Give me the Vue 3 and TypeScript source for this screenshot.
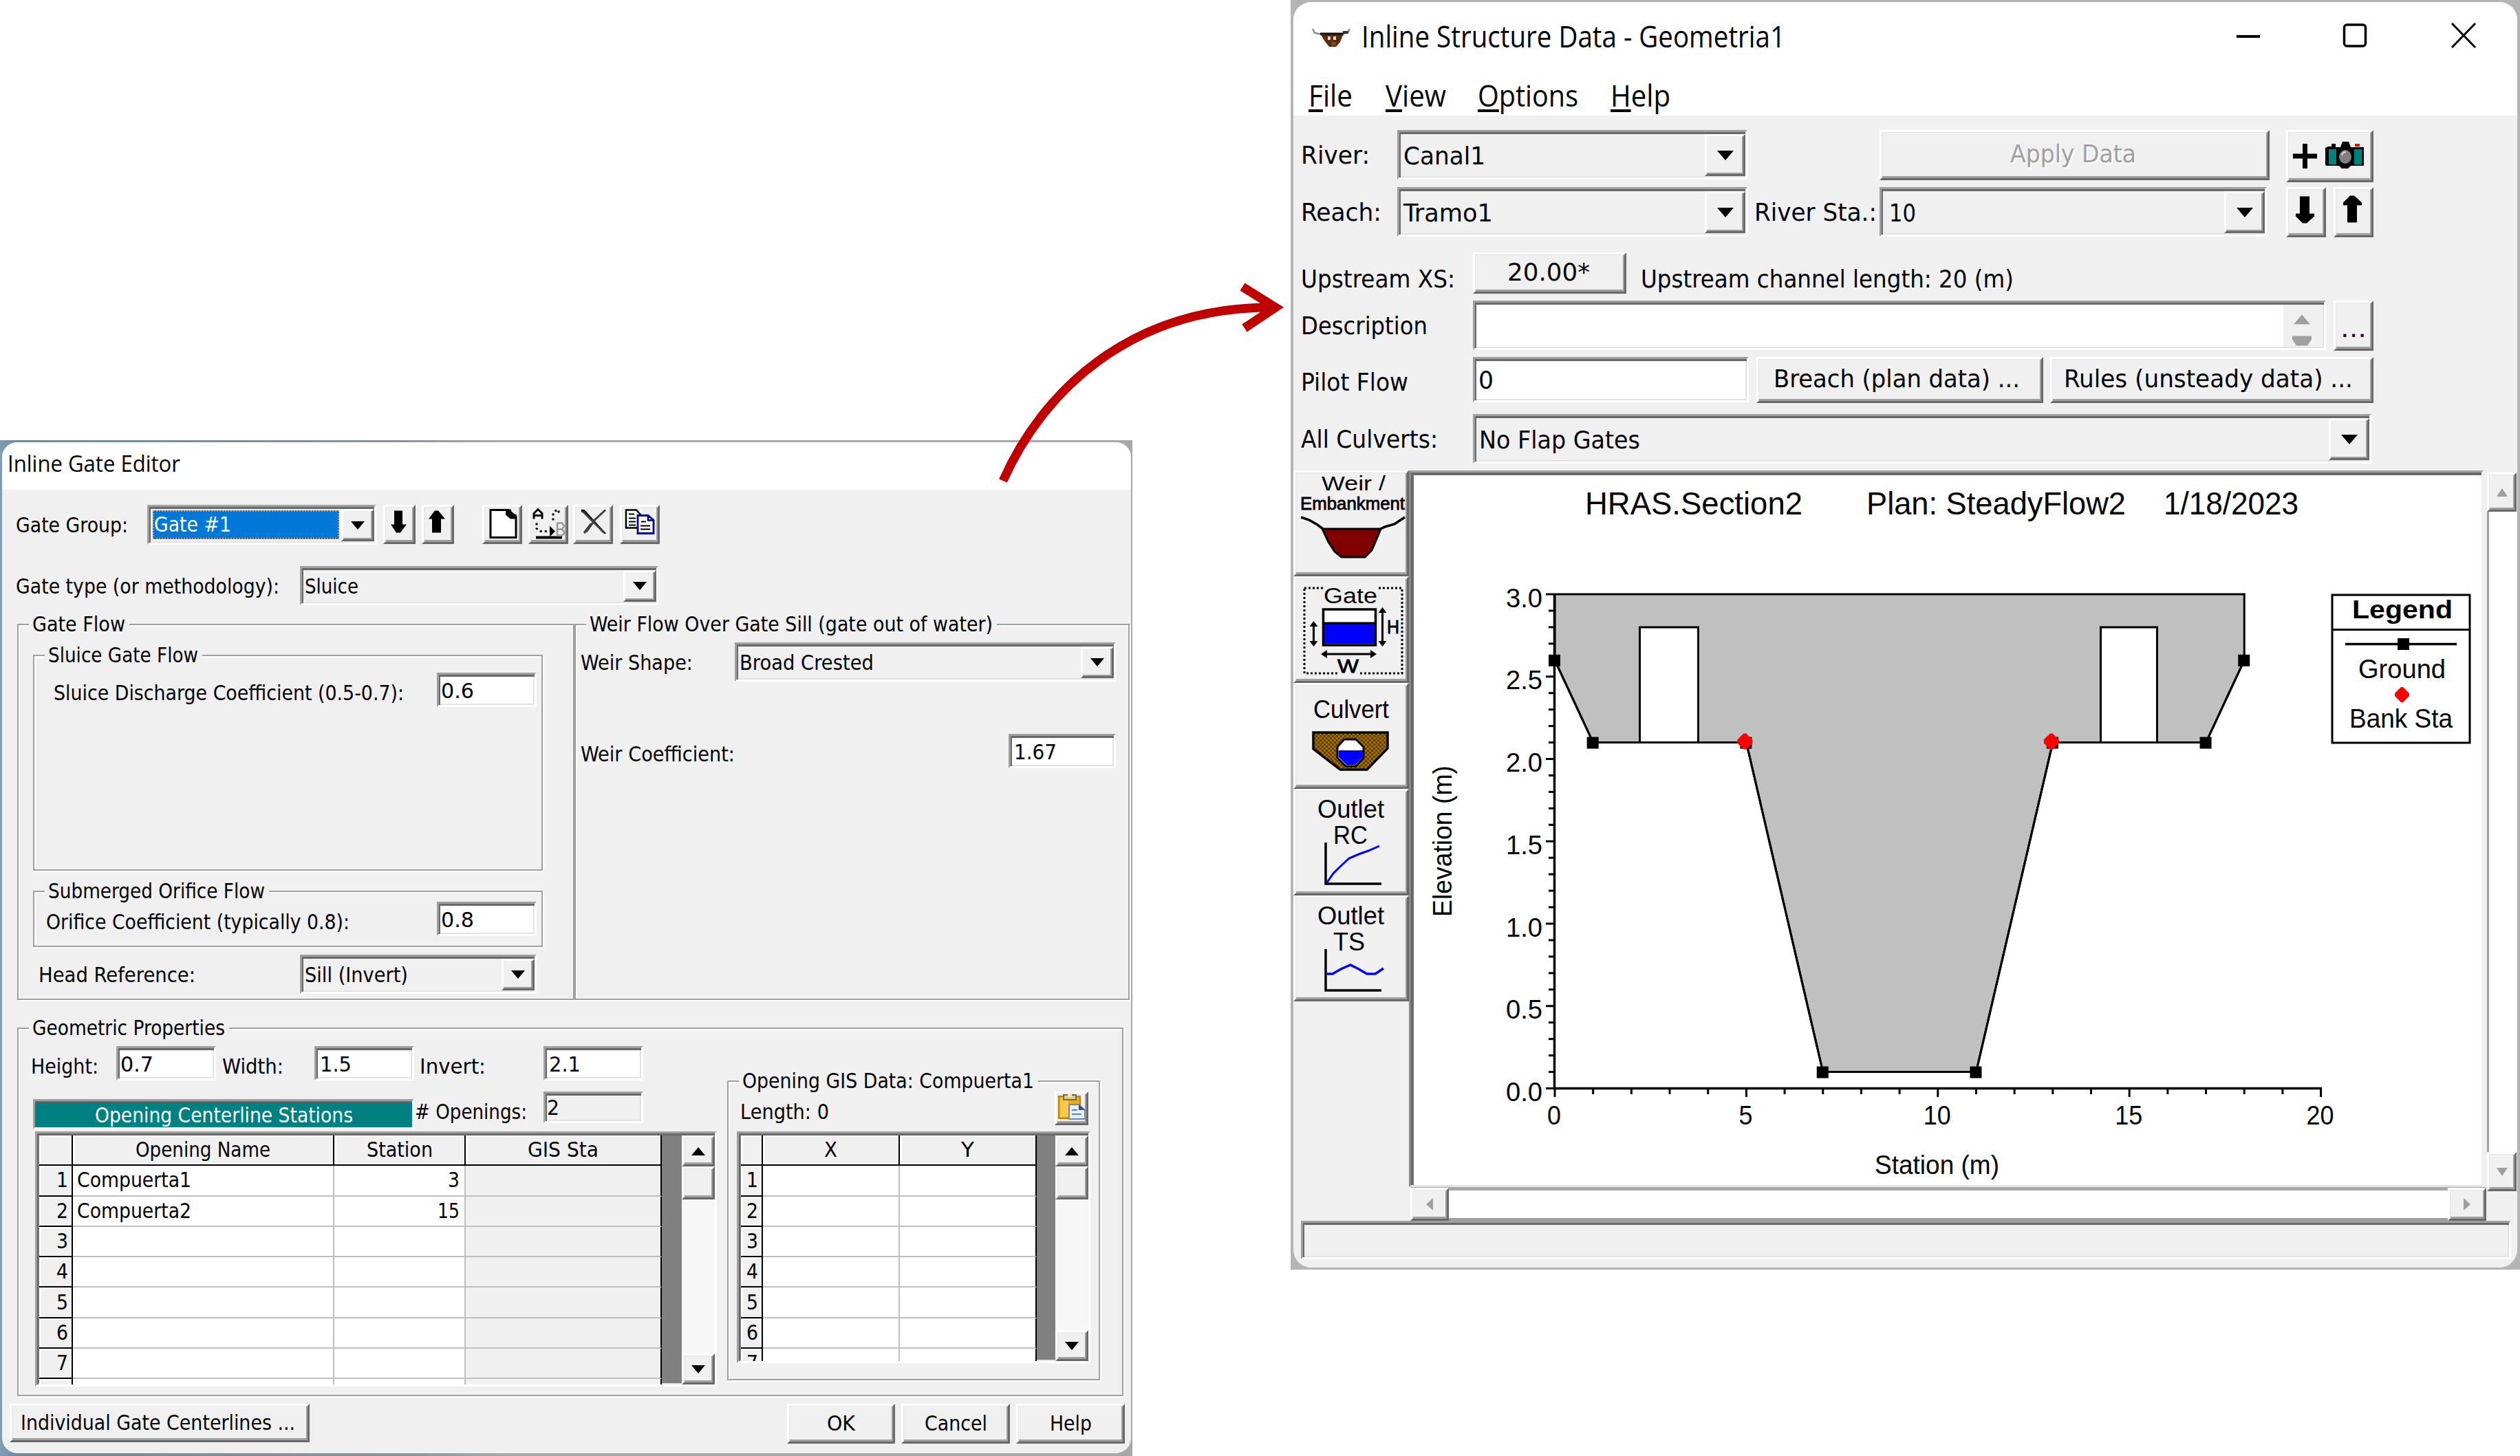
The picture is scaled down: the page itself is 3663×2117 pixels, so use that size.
<script setup lang="ts">
import type { Directive } from 'vue'

// Squeezes or stretches a label to the width it has in the dialog's own font.
const vFit: Directive<HTMLElement, number> = {
  mounted(el, { value }) {
    const natural = el.getBoundingClientRect().width
    const target = value + 3
    el.style.transform = `scaleX(${target / natural})`
    el.style.marginRight = `${target - natural}px`
  },
}

interface OpeningRow { n: number | null; name: string; nameW: number; station: string; stationW: number }
const openings: OpeningRow[] = [
  { n: 1, name: 'Compuerta1', nameW: 163, station: '3', stationW: 14 },
  { n: 2, name: 'Compuerta2', nameW: 163, station: '15', stationW: 29 },
  ...[3, 4, 5, 6, 7, null].map((n) => ({ n, name: '', nameW: 0, station: '', stationW: 0 })),
]
const gisRows = [1, 2, 3, 4, 5, 6, 7]

const menus = [
  { key: 'F', rest: 'ile', w: 61, cls: 'm-file' },
  { key: 'V', rest: 'iew', w: 85, cls: 'm-view' },
  { key: 'O', rest: 'ptions', w: 143, cls: 'm-options' },
  { key: 'H', rest: 'elp', w: 84, cls: 'm-help' },
]

// Cross-section plot scales
const px = (s: number) => 2260 + s * 55.68
const py = (e: number) => 1582.5 - e * 239.5
const ground: [number, number][] = [[0, 2.6], [1, 2.1], [5, 2.1], [7, 0.1], [11, 0.1], [13, 2.1], [17, 2.1], [18, 2.6]]
const groundPts = ground.map(([s, e]) => `${px(s)},${py(e)}`).join(' ')
const fillPts = `${px(0)},${py(3)} ${groundPts} ${px(18)},${py(3)}`
const banks = [5, 13]
const yTicks = Array.from({ length: 31 }, (_, i) => ({ y: py(i / 10), major: i % 5 === 0, label: (i / 10).toFixed(1) }))
const xTicks = Array.from({ length: 21 }, (_, i) => ({ x: px(i), major: i % 5 === 0, label: String(i) }))
</script>

<template>
  <main class="canvas">
    <!-- Inline Gate Editor -->
    <section class="gate-back">
      <div class="gate-win">
        <header class="g-title"><span v-fit="248" class="t">Inline Gate Editor</span></header>

        <div class="row r-group">
          <div class="lab"><span v-fit="160" class="t">Gate Group:</span></div>
          <div class="combo c-group">
            <div class="sel"><span v-fit="109" class="t">Gate #1</span></div>
            <div class="drop"><svg viewBox="0 0 20 12"><path d="M0 0H20L10 12Z" /></svg></div>
          </div>
          <div class="btn arrow"><svg viewBox="557 734 47 56"><path d="M573 742h12v20h6l-9 12h-6l-8-12h5z" /></svg></div>
          <div class="btn arrow"><svg viewBox="613 734 47 56"><path d="M628 774h13v-20h6l-10-12h-5l-9 12h5z" /></svg></div>
          <div class="btn tool">
            <svg viewBox="701 734 58 56">
              <path d="M713 741h26l11 10v30h-37z" fill="#fff" stroke="#000" stroke-width="3" />
              <path d="M735 740h8v5l8 3v6h-9l-7-6z" />
            </svg>
          </div>
          <div class="btn tool">
            <svg viewBox="768 734 58 56">
              <path d="M776 754v-8l6-6l6 6v8M776 749h12" fill="none" stroke="#000" stroke-width="3" />
              <path d="M780 760v8l6 4h11M804 756v-10l6-6l3 5" fill="none" stroke="#000" stroke-width="3" stroke-dasharray="3 4" />
              <path d="M799 764v16l8-8z" />
              <path d="M779 781h38" stroke="#000" stroke-width="4" />
              <path d="M810 760v18h7l4-4-4-5 3-5-3-4zM810 769h7" fill="none" stroke="#999" stroke-width="2.5" />
            </svg>
          </div>
          <div class="btn tool">
            <svg viewBox="833 734 58 56">
              <path d="M845 740l5 1 31 34-2 1-29-30-5-2z" />
              <path d="M847 743l31 31M880 741l-15 14-13 18" fill="none" stroke="#404040" stroke-width="3" />
              <path d="M848 773l10-13 3 2-8 10-3 4z" fill="#404040" />
            </svg>
          </div>
          <div class="btn tool">
            <svg viewBox="901 734 58 56">
              <path d="M910 741h15l6 7v19h-21z" fill="#fff" stroke="#000" stroke-width="2.5" />
              <path d="M914 747h8M914 753h10M914 758h10M914 763h10" stroke="#000" stroke-width="2" />
              <path d="M927 749h15l8 7v19h-23z" fill="#fff" stroke="#00008b" stroke-width="2.8" />
              <path d="M942 749v7h8" fill="none" stroke="#00008b" stroke-width="2.5" />
              <path d="M932 758h7M931 764h14M931 769h14" stroke="#000" stroke-width="2" />
            </svg>
          </div>
        </div>

        <div class="row r-type">
          <div class="lab"><span v-fit="380" class="t">Gate type (or methodology):</span></div>
          <div class="combo c-type">
            <span v-fit="75" class="t ctext">Sluice</span>
            <div class="drop"><svg viewBox="0 0 20 12"><path d="M0 0H20L10 12Z" /></svg></div>
          </div>
        </div>

        <div class="flows">
          <div class="group g-flow">
            <div class="legend"><span v-fit="132" class="t">Gate Flow</span></div>
            <div class="group g-sluice">
              <div class="legend"><span v-fit="215" class="t">Sluice Gate Flow</span></div>
              <div class="row r-sluice">
                <div class="lab"><span v-fit="506" class="t">Sluice Discharge Coefficient (0.5-0.7):</span></div>
                <div class="input"><span v-fit="45" class="t">0.6</span></div>
              </div>
            </div>
            <div class="group g-sub">
              <div class="legend"><span v-fit="312" class="t">Submerged Orifice Flow</span></div>
              <div class="row r-sub">
                <div class="lab"><span v-fit="438" class="t">Orifice Coefficient (typically 0.8):</span></div>
                <div class="input"><span v-fit="45" class="t">0.8</span></div>
              </div>
            </div>
            <div class="row r-head">
              <div class="lab"><span v-fit="225" class="t">Head Reference:</span></div>
              <div class="combo c-head">
                <span v-fit="147" class="t ctext">Sill (Invert)</span>
                <div class="drop"><svg viewBox="0 0 20 12"><path d="M0 0H20L10 12Z" /></svg></div>
              </div>
            </div>
          </div>
          <div class="group g-weir">
            <div class="legend"><span v-fit="583" class="t">Weir Flow Over Gate Sill (gate out of water)</span></div>
            <div class="row r-shape">
              <div class="lab"><span v-fit="160" class="t">Weir Shape:</span></div>
              <div class="combo c-shape">
                <span v-fit="192" class="t ctext">Broad Crested</span>
                <div class="drop"><svg viewBox="0 0 20 12"><path d="M0 0H20L10 12Z" /></svg></div>
              </div>
            </div>
            <div class="row r-coef">
              <div class="lab"><span v-fit="221" class="t">Weir Coefficient:</span></div>
              <div class="input i-coef"><span v-fit="59" class="t">1.67</span></div>
            </div>
          </div>
        </div>

        <div class="group g-geom">
          <div class="legend"><span v-fit="277" class="t">Geometric Properties</span></div>
          <div class="geom-left">
            <div class="row r-dims">
              <div class="lab"><span v-fit="95" class="t">Height:</span></div>
              <div class="input"><span v-fit="45" class="t">0.7</span></div>
              <div class="lab"><span v-fit="86" class="t">Width:</span></div>
              <div class="input"><span v-fit="43" class="t">1.5</span></div>
              <div class="lab"><span v-fit="93" class="t">Invert:</span></div>
              <div class="input"><span v-fit="43" class="t">2.1</span></div>
            </div>
            <div class="row r-open">
              <div class="teal"><span v-fit="372" class="t">Opening Centerline Stations</span></div>
              <div class="lab"><span v-fit="160" class="t"># Openings:</span></div>
              <div class="input i-num"><span v-fit="15" class="t">2</span></div>
            </div>
            <div class="table t-open">
              <div class="cells">
                <div class="tr">
                  <div class="th c-n"></div>
                  <div class="th"><span v-fit="193" class="t">Opening Name</span></div>
                  <div class="th"><span v-fit="93" class="t">Station</span></div>
                  <div class="th last"><span v-fit="100" class="t">GIS Sta</span></div>
                </div>
                <div v-for="(r, i) in openings" :key="i" class="tr">
                  <div class="rn"><span v-if="r.n" v-fit="14" class="t">{{ r.n }}</span></div>
                  <div class="td"><span v-if="r.name" v-fit="r.nameW" class="t">{{ r.name }}</span></div>
                  <div class="td right"><span v-if="r.station" v-fit="r.stationW" class="t">{{ r.station }}</span></div>
                  <div class="td off last"></div>
                </div>
              </div>
              <div class="vbar">
                <div class="btn"><svg viewBox="0 0 20 12"><path d="M0 12H20L10 0Z" /></svg></div>
                <div class="btn thumb"></div>
                <div class="btn end"><svg viewBox="0 0 20 12"><path d="M0 0H20L10 12Z" /></svg></div>
              </div>
            </div>
          </div>
          <div class="group g-gis">
            <div class="legend"><span v-fit="421" class="t">Opening GIS Data: Compuerta1</span></div>
            <div class="row r-len">
              <div class="lab"><span v-fit="126" class="t">Length: 0</span></div>
              <div class="btn paste">
                <svg viewBox="1533 1588 49 49">
                  <path d="M1539 1595h31v32h-31z" fill="#e9a820" stroke="#b98018" stroke-width="2" />
                  <path d="M1541 1597h12v28h-12z" fill="#f8c94c" />
                  <path d="M1546 1593h18v7h-18z" fill="#d8cfa0" stroke="#7d6a30" stroke-width="2" />
                  <path d="M1552 1591h6v5h-6z" fill="#f4e7a8" />
                  <path d="M1554 1607h14l9 8v13h-23z" fill="#e6f0fa" stroke="#6a87ad" stroke-width="2" />
                  <path d="M1568 1607v8h9z" fill="#37507a" />
                  <path d="M1558 1615h8M1558 1621h14" stroke="#5e86bd" stroke-width="2" />
                </svg>
              </div>
            </div>
            <div class="table t-gis">
              <div class="cells">
                <div class="tr">
                  <div class="th c-n"></div>
                  <div class="th"><span v-fit="16" class="t">X</span></div>
                  <div class="th last"><span v-fit="16" class="t">Y</span></div>
                </div>
                <div v-for="n in gisRows" :key="n" class="tr">
                  <div class="rn"><span v-fit="14" class="t">{{ n }}</span></div>
                  <div class="td"></div>
                  <div class="td last"></div>
                </div>
              </div>
              <div class="vbar">
                <div class="btn"><svg viewBox="0 0 20 12"><path d="M0 12H20L10 0Z" /></svg></div>
                <div class="btn thumb"></div>
                <div class="btn end"><svg viewBox="0 0 20 12"><path d="M0 0H20L10 12Z" /></svg></div>
              </div>
            </div>
          </div>
        </div>

        <footer class="g-foot">
          <div class="btn b-ind"><span v-fit="396" class="t">Individual Gate Centerlines ...</span></div>
          <div class="btn b-act"><span v-fit="38" class="t">OK</span></div>
          <div class="btn b-act"><span v-fit="88" class="t">Cancel</span></div>
          <div class="btn b-act"><span v-fit="58" class="t">Help</span></div>
        </footer>
      </div>
    </section>

    <!-- Inline Structure Data -->
    <section class="str-back">
      <div class="str-win">
        <header class="s-title">
          <svg class="appicon" viewBox="1906 38 58 36">
            <path d="M1908 42l3 6 10 2M1962 42l-3 5-8 3" fill="none" stroke="#8a8a8a" stroke-width="2.5" />
            <path d="M1919 49h34l-5 12-6 7h-10l-7-9z" fill="#5a2c08" />
            <path d="M1919 49h34" stroke="#111" stroke-width="3" />
            <path d="M1930 53h4v5h-4zM1938 53h4v5h-4z" fill="#ddd" />
            <path d="M1935 61h7v5h-7z" fill="#8a4510" />
            <path d="M1952 45h8v4h-8z" fill="#333" />
          </svg>
          <span v-fit="613" class="t">Inline Structure Data - Geometria1</span>
          <svg class="wbtns" viewBox="3240 28 370 48">
            <path d="M3251 53h34" stroke="#000" stroke-width="4" />
            <rect x="3407.500" y="36" width="31" height="31" rx="4" fill="none" stroke="#000" stroke-width="3.500" />
            <path d="M3564 34l34 35M3598 34l-34 35" stroke="#000" stroke-width="3" />
          </svg>
        </header>
        <nav class="menu">
          <span v-for="m in menus" :key="m.key" v-fit="m.w" class="t" :class="m.cls"><u>{{ m.key }}</u>{{ m.rest }}</span>
        </nav>

        <div class="row r-river">
          <div class="lab"><span v-fit="97" class="t">River:</span></div>
          <div class="combo c-river"><span v-fit="116" class="t ctext">Canal1</span><div class="drop"><svg viewBox="0 0 24 14"><path d="M0 0H24L12 14Z" /></svg></div></div>
          <div class="btn b-apply"><span v-fit="180" class="t">Apply Data</span></div>
          <div class="btn b-cam">
            <svg viewBox="3323 189 127 76">
              <path d="M3333 227h35M3350.500 209v36" stroke="#000" stroke-width="7" />
              <path d="M3389 209h6v5h7l3-8h9l3 8h19v27h-19l-4 4h-9l-4-4h-19l-1-2v-24l4-2h5z" />
              <path d="M3385 217h11v22h-11zM3422 217h11v22h-11z" fill="#008080" />
              <ellipse cx="3409" cy="228" rx="9" ry="10" fill="#808080" />
              <path d="M3404 226q1-5 6-5" stroke="#ddd" stroke-width="2" fill="none" />
              <path d="M3423 209h7v4h-7z" fill="#f00" />
            </svg>
          </div>
        </div>
        <div class="row r-reach">
          <div class="lab"><span v-fit="114" class="t">Reach:</span></div>
          <div class="combo c-river"><span v-fit="127" class="t ctext">Tramo1</span><div class="drop"><svg viewBox="0 0 24 14"><path d="M0 0H24L12 14Z" /></svg></div></div>
          <div class="lab"><span v-fit="175" class="t">River Sta.:</span></div>
          <div class="combo c-sta"><span v-fit="36" class="t ctext">10</span><div class="drop"><svg viewBox="0 0 24 14"><path d="M0 0H24L12 14Z" /></svg></div></div>
          <div class="btn b-arr"><svg viewBox="3323 272 58 72"><path d="M3343 285h14v25h7v4l-11 10h-6l-10-10v-4h6z" /></svg></div>
          <div class="btn b-arr"><svg viewBox="3392 272 58 72"><path d="M3412 323h14v-25h7v-4l-11-10h-6l-10 10v4h6z" /></svg></div>
        </div>
        <div class="row r-up">
          <div class="lab"><span v-fit="221" class="t">Upstream XS:</span></div>
          <div class="btn b-xs"><span v-fit="117" class="t">20.00*</span></div>
          <div class="lab"><span v-fit="539" class="t">Upstream channel length: 20 (m)</span></div>
        </div>
        <div class="row r-desc">
          <div class="lab"><span v-fit="181" class="t">Description</span></div>
          <div class="input i-desc">
            <svg viewBox="3320 443 57 60"><path d="M3347 457l12 14h-24zM3333 488h28v5l-6 9h-16l-6-9z" fill="#a0a0a0" /></svg>
          </div>
          <div class="btn b-dots"><span v-fit="35" class="t">...</span></div>
        </div>
        <div class="row r-pilot">
          <div class="lab"><span v-fit="153" class="t">Pilot Flow</span></div>
          <div class="input i-pilot"><span v-fit="19" class="t">0</span></div>
          <div class="btn b-breach"><span v-fit="355" class="t">Breach (plan data) ...</span></div>
          <div class="btn b-rules"><span v-fit="417" class="t">Rules (unsteady data) ...</span></div>
        </div>
        <div class="row r-culv">
          <div class="lab"><span v-fit="196" class="t">All Culverts:</span></div>
          <div class="combo c-culv"><span v-fit="231" class="t ctext">No Flap Gates</span><div class="drop"><svg viewBox="0 0 24 14"><path d="M0 0H24L12 14Z" /></svg></div></div>
        </div>

        <div class="main">
          <div class="tools">
            <div class="btn big">
              <svg viewBox="1879 684 169 154">
                <text x="1920" y="713" font-size="29" textLength="93" lengthAdjust="spacingAndGlyphs">Weir /</text>
                <text x="1889" y="741" font-size="26" textLength="152" lengthAdjust="spacingAndGlyphs" class="heavy">Embankment</text>
                <path d="M1921 769h85l-7 17-6 14-10 10h-34l-10-8-9-14z" fill="#800000" stroke="#000" stroke-width="3" />
                <path d="M1890 752l12 4 12 7 8 6M2004 770l8-4 14-4 15-10" fill="none" stroke="#000" stroke-width="3.500" />
              </svg>
            </div>
            <div class="btn big">
              <svg viewBox="1879 838 169 154">
                <rect x="1895" y="854" width="142" height="124" fill="none" stroke="#000" stroke-width="3" stroke-dasharray="3 3" />
                <path d="M1922 846h80v16h-80zM1944 960h30v22h-30z" fill="#f0f0f0" />
                <text x="1923" y="876" font-size="31" textLength="78" lengthAdjust="spacingAndGlyphs">Gate</text>
                <rect x="1922.500" y="885" width="76" height="52" fill="#fff" stroke="#000" stroke-width="3.500" />
                <path d="M1924 906h73v29h-73z" fill="#00f" />
                <path d="M1922 905h77M1908.500 908v26M2008.500 888v46M1925 950h70" stroke="#000" stroke-width="3" />
                <path d="M1908.500 902l6 8h-12zM1908.500 939l6-8h-12zM2008.500 882l6 8h-12zM2008.500 939l6-8h-12zM1919 950l9-6v12zM2000 950l-9-6v12z" />
                <text x="2015" y="920" font-size="28" textLength="18" lengthAdjust="spacingAndGlyphs" class="heavy">H</text>
                <text x="1943" y="977" font-size="27" textLength="31" lengthAdjust="spacingAndGlyphs" class="heavy">W</text>
              </svg>
            </div>
            <div class="btn big">
              <svg viewBox="1879 992 169 154">
                <defs>
                  <pattern id="earth" width="6" height="6" patternUnits="userSpaceOnUse">
                    <rect width="6" height="6" fill="#8a2a00" /><rect width="3" height="3" fill="#808000" /><rect x="3" y="3" width="3" height="3" fill="#808000" />
                  </pattern>
                </defs>
                <text x="1908" y="1043" font-size="36" textLength="110" lengthAdjust="spacingAndGlyphs">Culvert</text>
                <path d="M1908 1064h108v23l-30 31h-39l-39-30z" fill="url(#earth)" stroke="#000" stroke-width="3.500" />
                <path d="M1953 1074h17l11 11v16l-11 12h-15l-12-12v-16z" fill="#fff" stroke="#000" stroke-width="3" />
                <path d="M1945 1090h35v10l-11 11h-13l-11-11z" fill="#00f" />
              </svg>
            </div>
            <div class="btn big">
              <svg viewBox="1879 1146 169 154">
                <text x="1914" y="1188" font-size="37" textLength="97" lengthAdjust="spacingAndGlyphs">Outlet</text>
                <text x="1937" y="1226" font-size="37" textLength="50" lengthAdjust="spacingAndGlyphs">RC</text>
                <path d="M1926 1224v60h81" fill="none" stroke="#000" stroke-width="3.500" />
                <path d="M1928 1282l9-13 9-9 14-13 14-6 14-5 16-7" fill="none" stroke="#00f" stroke-width="3" />
              </svg>
            </div>
            <div class="btn big">
              <svg viewBox="1879 1301 169 154">
                <text x="1914" y="1343" font-size="37" textLength="97" lengthAdjust="spacingAndGlyphs">Outlet</text>
                <text x="1937" y="1381" font-size="37" textLength="46" lengthAdjust="spacingAndGlyphs">TS</text>
                <path d="M1926 1379v60h81" fill="none" stroke="#000" stroke-width="3.500" />
                <path d="M1928 1415h8l12-7 14-6 12 6 12 7h12l12-8" fill="none" stroke="#00f" stroke-width="3.500" />
              </svg>
            </div>
          </div>
          <div class="plot">
            <svg viewBox="2055 690 1553 1034">
              <text x="2304" y="748" font-size="47" textLength="316" lengthAdjust="spacingAndGlyphs">HRAS.Section2</text>
              <text x="2713" y="748" font-size="47" textLength="377" lengthAdjust="spacingAndGlyphs">Plan: SteadyFlow2</text>
              <text x="3145" y="748" font-size="47" textLength="196" lengthAdjust="spacingAndGlyphs">1/18/2023</text>

              <polygon :points="fillPts" fill="#c0c0c0" stroke="#000" stroke-width="3" />
              <path d="M2383.500 1080V912h85v168M3053.500 1080V912h82v168" fill="#fff" stroke="#000" stroke-width="3" />
              <polyline :points="groundPts" fill="none" stroke="#000" stroke-width="3" />
              <rect v-for="(g, i) in ground" :key="i" :x="px(g[0]) - 9" :y="py(g[1]) - 8" width="17" height="17" />
              <path v-for="b in banks" :key="b" :d="`M${px(b) - 4} ${py(2.1) - 13}h4l9 9v5l-9 9h-4l-9-9v-5z`" fill="#f00" />

              <path d="M2259.500 863V1582.500H3375" fill="none" stroke="#000" stroke-width="3.500" />
              <g v-for="t in yTicks" :key="t.label">
                <path :d="`M${t.major ? 2247 : 2251} ${t.y}H2259`" stroke="#000" stroke-width="3" />
                <text v-if="t.major" x="2189" :y="t.y + 18.500" font-size="38" textLength="53" lengthAdjust="spacingAndGlyphs">{{ t.label }}</text>
              </g>
              <g v-for="t in xTicks" :key="t.label">
                <path :d="`M${t.x} 1583v${t.major ? 12 : 8}`" stroke="#000" stroke-width="3" />
                <text v-if="t.major" :x="t.x - 1" y="1635" font-size="38" text-anchor="middle" :textLength="t.label.length * 20" lengthAdjust="spacingAndGlyphs">{{ t.label }}</text>
              </g>
              <text x="2725" y="1707" font-size="38" textLength="181" lengthAdjust="spacingAndGlyphs">Station (m)</text>
              <text transform="translate(2110 1333) rotate(-90)" font-size="38" textLength="220" lengthAdjust="spacingAndGlyphs">Elevation (m)</text>

              <path d="M3390 865h200v215h-200zM3390 915.500h200" fill="#fff" stroke="#000" stroke-width="3" />
              <text x="3419" y="899" font-size="37" font-weight="bold" textLength="146" lengthAdjust="spacingAndGlyphs">Legend</text>
              <path d="M3409 936.500h162" stroke="#000" stroke-width="3.500" />
              <rect x="3485" y="928" width="17" height="17" />
              <text x="3428" y="986" font-size="38" textLength="127" lengthAdjust="spacingAndGlyphs">Ground</text>
              <path d="M3490 999h3l9 9v4l-9 9h-3l-9-9v-4z" fill="#f00" />
              <text x="3415" y="1058" font-size="38" textLength="150" lengthAdjust="spacingAndGlyphs">Bank Sta</text>
            </svg>
          </div>
          <div class="pvbar">
            <div class="btn"><svg viewBox="0 0 16 12"><path d="M0 12H16L8 0Z" fill="#a0a0a0" /></svg></div>
            <div class="btn"><svg viewBox="0 0 16 12"><path d="M0 0H16L8 12Z" fill="#a0a0a0" /></svg></div>
          </div>
        </div>
        <div class="phbar">
          <div class="btn"><svg viewBox="0 0 10 18"><path d="M10 0V18L0 9Z" fill="#a0a0a0" /></svg></div>
          <div class="btn"><svg viewBox="0 0 10 18"><path d="M0 0V18L10 9Z" fill="#a0a0a0" /></svg></div>
        </div>
        <div class="status"></div>
      </div>
    </section>

    <svg class="link" viewBox="1440 400 440 310">
      <path d="M1458 699C1514 572 1640 446 1850 447" fill="none" stroke="#c00000" stroke-width="13" />
      <path d="M1806 417L1854 447L1809 477" fill="none" stroke="#c00000" stroke-width="13" />
    </svg>
  </main>
</template>

<style>
body { margin: 0; background: #fff; }
</style>

<style scoped>
.canvas { position: relative; width: 3663px; height: 2117px; overflow: hidden; background: #fff; color: #000; }
.canvas * { box-sizing: border-box; }
svg { display: block; }
.t { display: inline-block; flex: none; white-space: pre; transform-origin: 0 50%; }

.gate-back {
  position: absolute; left: 0; top: 640px; width: 1646px; height: 1477px; padding: 3px 3px 4px;
  background: linear-gradient(90deg, #7f9db5 0, #71889c 1.5%, #8a9298 35%, #a8a8a8 45%, #a8a8a8 100%);
  font: 30px/36px "DejaVu Sans Condensed", "DejaVu Sans", sans-serif; font-stretch: condensed;
}
.gate-win { width: 1641px; height: 1470px; border-radius: 22px; background: #f0f0f0; overflow: hidden; }
.g-title { height: 69px; background: #fff; padding: 8px 0 0 8px; font: 33px/45px "Open Sans", "Noto Sans", sans-serif; }

.row { display: grid; align-items: start; justify-items: start; }
.lab { display: flex; padding-top: 12px; margin-left: -1px; }
.str-win .lab { padding-top: 15px; }

.btn {
  display: flex; align-items: center; justify-content: center; background: #f0f0f0;
  border: 3px solid; border-color: #fff #696969 #696969 #fff;
  box-shadow: inset 1px 1px #e3e3e3, inset -2px -3px #a0a0a0;
}
.combo, .input, .table, .teal, .status {
  background: #f0f0f0; border: 3px solid; border-color: #a0a0a0 #fff #fff #a0a0a0;
  box-shadow: inset 2px 3px #696969, inset -2px -2px #e3e3e3;
}
.combo { display: flex; justify-content: space-between; padding: 3px 0 2px 2px; height: 57px; }
.ctext { padding-top: 5.5px; margin-left: 2px; }
.drop {
  display: flex; align-items: center; justify-content: center; flex: none; width: 48px; background: #f0f0f0;
  border: 3px solid; border-color: #fff #696969 #696969 #fff; box-shadow: inset -2px -2px #a0a0a0;
}
.drop svg { width: 20px; height: 12px; }
.input { display: flex; background: #fff; width: 145px; height: 50px; padding: 5.5px 0 0 3px; }
.str-win .combo { height: 72px; }
.str-win .ctext { padding-top: 9.5px; margin-left: 4px; }
.str-win .drop { width: 59px; }
.str-win .drop svg { width: 24px; height: 14px; }

.r-group { margin-top: 22px; padding-left: 21px; height: 58px; grid-template-columns: 190px 343px 56px 88px 67px 65px 68px 58px; }
.c-group { width: 333px; height: 58px; }
.sel { width: 271px; height: 42px; margin: 2px 0 0 3px; padding-top: 3px; background: #0078d7; color: #fff; outline: 2px dotted #ff8c1a; outline-offset: -2px; }
.sel .t { margin-left: 2px; }
.btn.arrow { width: 47px; height: 57px; }
.btn.tool { width: 58px; height: 57px; }
.arrow svg, .tool svg, .paste svg, .b-cam svg, .b-arr svg { flex: none; width: calc(100% + 6px); height: calc(100% + 6px); margin: -3px; overflow: visible; }
.r-type { margin-top: 31px; padding-left: 21px; height: 57px; grid-template-columns: 412px 521px; }
.c-type { width: 521px; }

.group { position: relative; border: 2px solid #a0a0a0; box-shadow: inset 2px 2px #fff, 2px 2px #fff; }
.legend { position: absolute; left: 15px; top: -19px; height: 36px; padding: 0 6px 0 5px; background: #f0f0f0; display: flex; }
.flows { display: flex; margin: 27px 0 0 22px; }
.g-flow { width: 810px; height: 547px; }
.g-weir { width: 807px; height: 547px; }
.g-sluice { margin: 43px 0 0 21px; width: 741px; height: 314px; }
.r-sluice { margin-top: 24px; padding-left: 29px; grid-template-columns: 556px 145px; }
.g-sub { margin: 29px 0 0 21px; width: 741px; height: 82px; }
.r-sub { margin-top: 14px; padding-left: 18px; grid-template-columns: 567px 145px; }
.r-head { margin-top: 11px; padding-left: 30px; grid-template-columns: 379px 344px; }
.c-head { width: 344px; }
.r-shape { margin-top: 25px; padding-left: 8px; height: 57px; grid-template-columns: 223px 554px; }
.c-shape { width: 554px; }
.r-coef { margin-top: 76px; padding-left: 8px; grid-template-columns: 621px 156px; }
.i-coef { width: 156px; padding-left: 5px; }

.g-geom { display: flex; align-items: flex-start; margin: 40px 0 0 22px; width: 1608px; height: 536px; }
.geom-left { width: 1030px; }
.r-dims { margin-top: 25px; padding-left: 19px; height: 50px; grid-template-columns: 123px 155px 133px 154px 179px 145px; }
.r-dims .input:nth-child(n + 3) { padding-left: 5px; }
.r-open { margin-top: 16px; padding-left: 21px; height: 58px; grid-template-columns: 556px 186px 145px; }
.teal { width: 554px; height: 44px; margin-top: 11px; background: #008080; color: #fff; display: flex; justify-content: center; padding-top: 3px; box-shadow: inset 0 2px #696969; }
.i-num { background: #f0f0f0; height: 46px; padding-top: 3px; padding-left: 2px; }

.table { display: flex; justify-content: space-between; overflow: hidden; padding: 3px 0 0 3px; background: #808080; }
.t-open { margin-left: 24px; width: 991px; height: 371px; }
.t-gis { margin: 9px 0 0 12px; width: 514px; height: 337px; }
.tr { display: grid; height: 44.3px; }
.t-open .tr { grid-template-columns: 49px 380px 191px 285px; }
.t-gis .tr { grid-template-columns: 32px 199px 199px; }
.th, .rn, .td { display: flex; align-items: center; overflow: hidden; border-right: 2.5px solid #c0c0c0; border-bottom: 2.5px solid #c0c0c0; background: #fff; }
.th { justify-content: center; background: #f0f0f0; border-color: #000; box-shadow: inset 3px 2px #fff; }
.rn { justify-content: flex-end; padding-right: 5px; background: #f0f0f0; border-color: #000; box-shadow: inset 3px 2px #fff; }
.td { padding-left: 6px; }
.td.right { justify-content: flex-end; padding-right: 7px; }
.td.off { background: #f0f0f0; }
.last { border-right-color: #000; }
.vbar { display: flex; flex-direction: column; width: 48px; flex: none; background: #f7f7f7; }
.vbar .btn { height: 45px; flex: none; }
.vbar .thumb { height: 48px; }
.vbar .end { margin-top: auto; }
.vbar svg { width: 20px; height: 12px; }
.g-gis { margin-top: 75px; width: 542px; height: 436px; }
.r-len { margin-top: 14px; padding-left: 18px; height: 49px; grid-template-columns: 456px 49px; }
.paste { width: 49px; height: 49px; }
.g-foot { display: flex; margin: 11px 0 0 11px; }
.b-ind { width: 436px; height: 56px; margin-right: 694px; padding-right: 5px; padding-bottom: 1px; }
.b-act { width: 158px; height: 58px; margin-right: 9px; padding-bottom: 1px; }

.str-back {
  position: absolute; left: 1876px; top: 0; width: 1787px; height: 1846px; padding: 3px 4px; background: #b4b4b4;
  font: 36px/44px "DejaVu Sans Condensed", "DejaVu Sans", sans-serif; font-stretch: condensed;
}
.str-win { width: 1779px; height: 1840px; border-radius: 26px; background: #f0f0f0; overflow: hidden; }
.s-title, .menu { display: flex; background: #fff; font: 43px/60px "Open Sans", "Noto Sans", sans-serif; }
.s-title { height: 105px; padding: 20px 0 0 26px; }
.appicon { width: 58px; height: 36px; margin: 15px 15px 0 0; }
.wbtns { width: 370px; height: 48px; margin: 5px 0 0 auto; position: relative; right: 49px; }
.menu { display: grid; grid-template-columns: 133px 135px 193px 100px; height: 60px; padding-top: 1px; align-items: start; justify-items: start; }
.menu u { text-decoration-thickness: 4px; text-underline-offset: 4px; }
.m-file, .m-view, .m-options, .m-help { margin-left: 22px; }
.m-view { margin-left: 1px; }
.m-options, .m-help { margin-left: 0; }

.r-river { margin-top: 21px; padding-left: 12px; height: 76px; grid-template-columns: 139px 701px 591px 127px; }
.c-river { width: 509px; }
.b-apply { width: 567px; height: 73px; padding: 0 4px 3px 0; color: #a0a0a0; text-shadow: 2px 2px #fff; }
.b-cam { width: 127px; height: 76px; }
.r-reach { margin-top: 7px; padding-left: 12px; height: 73px; grid-template-columns: 139px 520px 181px 591px 69px 58px; }
.c-sta { width: 563px; }
.str-win .c-sta .ctext { margin-left: 9px; }
.b-arr { width: 58px; height: 73px; }
.r-up { margin-top: 22px; padding-left: 12px; height: 59px; grid-template-columns: 249px 245px 545px; }
.str-win .r-up .lab { padding-top: 17px; }
.b-xs { width: 223px; height: 60px; padding: 0 4px 2px 0; }
.r-desc { margin-top: 11px; padding-left: 12px; height: 72px; grid-template-columns: 249px 1251px 58px; }
.i-desc { width: 1240px; height: 72px; justify-content: flex-end; padding: 3px 2px 2px 0; }
.i-desc svg { width: 57px; height: 61px; background: #f0f0f0; }
.b-dots { width: 58px; height: 73px; padding-top: 9px; color: #30003c; }
.r-pilot { margin-top: 10px; padding-left: 12px; height: 66px; grid-template-columns: 249px 412px 427px 470px; }
.i-pilot { width: 401px; height: 66px; padding: 9px 0 0 5px; }
.b-breach { width: 417px; height: 67px; padding: 0 9px 3px 0; }
.b-rules { width: 470px; height: 67px; padding: 0 11px 3px 0; }
.r-culv { margin-top: 17px; padding-left: 12px; height: 72px; grid-template-columns: 249px 1306px; }
.c-culv { width: 1306px; }

.main { display: flex; height: 1042px; margin-top: 10px; }
.tools { width: 168px; flex: none; }
.big { height: 154.4px; }
.big svg { flex: none; width: 169px; height: 154px; margin: -3px; font-family: "Liberation Sans", Arial, sans-serif; }
.heavy { stroke: #000; stroke-width: 0.8px; }
.plot { width: 1562px; flex: none; background: #fff; border: 3px solid; border-color: #a0a0a0 #f0f0f0 #e3e3e3 #8a8a8a; box-shadow: inset 4px 4px #696969; padding: 3px 0 0 4px; }
.plot svg { width: 1553px; height: 1034px; font-family: "Liberation Sans", Arial, sans-serif; }
.pvbar { display: flex; flex-direction: column; justify-content: space-between; width: 43px; margin: 3px 0 -6px 5px; background: #fff; border-left: 3px solid #a0a0a0; }
.pvbar .btn { height: 57px; margin-left: -3px; }
.pvbar svg { width: 16px; height: 12px; }
.phbar { display: flex; justify-content: space-between; width: 1564px; height: 49px; margin-left: 170px; background: #fff; border-top: 5px solid #a8a8a8; border-bottom: 4px solid #a0a0a0; }
.phbar .btn { width: 56px; height: 48px; margin-top: -4px; }
.phbar svg { width: 10px; height: 18px; }
.status { width: 1759px; height: 56px; margin-left: 11px; }
.link { position: absolute; left: 1440px; top: 400px; width: 440px; height: 310px; }
</style>
